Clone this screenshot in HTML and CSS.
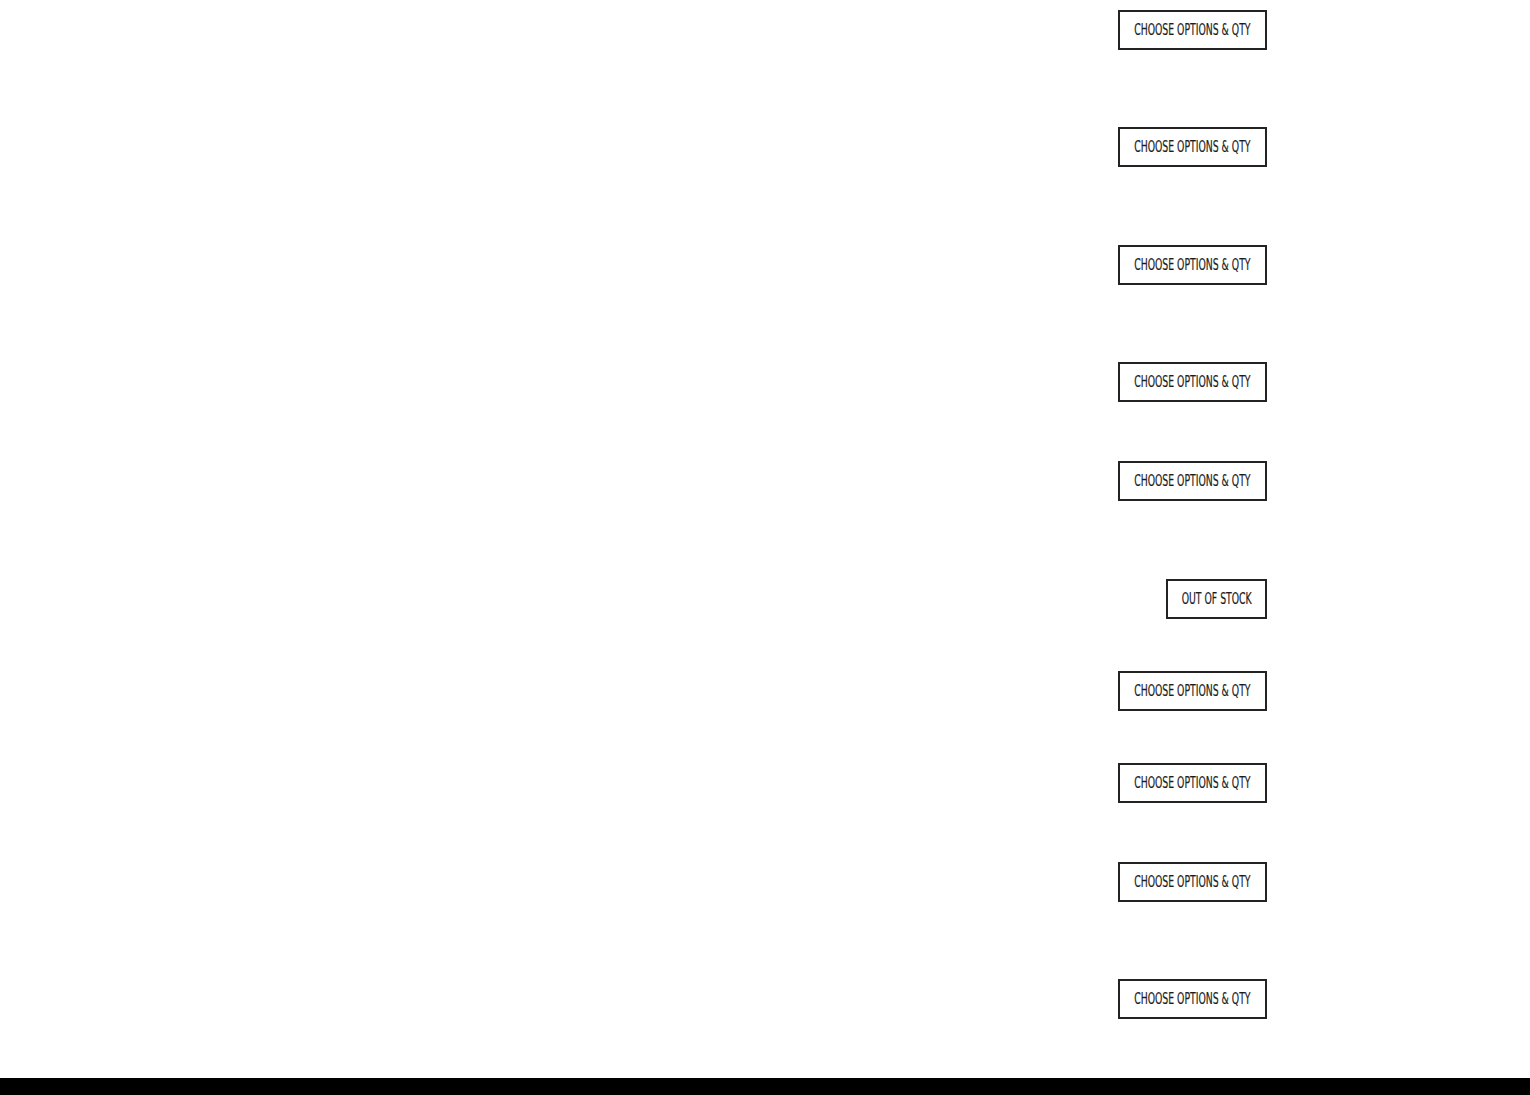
FILE: index.html
```html
<!DOCTYPE html>
<html lang="en">
<head>
<meta charset="utf-8">
<title>Products</title>
<link rel="stylesheet" href="styles.css">
</head>
<body>
<main class="list">
  <div class="row h117"><a class="btn btn-wide" href="#"><span class="label">CHOOSE OPTIONS &amp; QTY</span></a></div>
  <div class="row h118"><a class="btn btn-wide" href="#"><span class="label">CHOOSE OPTIONS &amp; QTY</span></a></div>
  <div class="row h117"><a class="btn btn-wide" href="#"><span class="label">CHOOSE OPTIONS &amp; QTY</span></a></div>
  <div class="row h99"><a class="btn btn-wide" href="#"><span class="label">CHOOSE OPTIONS &amp; QTY</span></a></div>
  <div class="row h118"><a class="btn btn-wide" href="#"><span class="label">CHOOSE OPTIONS &amp; QTY</span></a></div>
  <div class="row h92"><a class="btn btn-narrow" href="#"><span class="label">OUT OF STOCK</span></a></div>
  <div class="row h92"><a class="btn btn-wide" href="#"><span class="label">CHOOSE OPTIONS &amp; QTY</span></a></div>
  <div class="row h99"><a class="btn btn-wide" href="#"><span class="label">CHOOSE OPTIONS &amp; QTY</span></a></div>
  <div class="row h117"><a class="btn btn-wide" href="#"><span class="label">CHOOSE OPTIONS &amp; QTY</span></a></div>
  <div class="row h99"><a class="btn btn-wide" href="#"><span class="label">CHOOSE OPTIONS &amp; QTY</span></a></div>
</main>
<footer class="footer"></footer>
</body>
</html>
```
FILE: styles.css
```css
html, body {
  margin: 0;
  padding: 0;
  background: #fff;
}
body {
  font-family: "DejaVu Sans", sans-serif;
  font-stretch: condensed;
}
.list {
  display: flex;
  flex-direction: column;
  padding-top: 10px;
  padding-right: 263px;
}
.row {
  display: flex;
  justify-content: flex-end;
  align-items: flex-start;
}
.h117 { height: 117px; }
.h118 { height: 118px; }
.h99 { height: 99px; }
.h92 { height: 92px; }
.btn {
  box-sizing: border-box;
  height: 40px;
  display: flex;
  align-items: center;
  justify-content: center;
  border: 2px solid #232323;
  color: #1c1c1c;
  text-decoration: none;
  font-size: 15px;
  line-height: 1;
  white-space: nowrap;
}
.btn-wide { width: 149px; }
.btn-narrow { width: 101px; }
.label {
  display: inline-block;
  transform: scaleX(0.69);
  transform-origin: center;
  -webkit-text-stroke: 0.2px #1c1c1c;
}
.footer {
  height: 17px;
  background: #000;
}
```
